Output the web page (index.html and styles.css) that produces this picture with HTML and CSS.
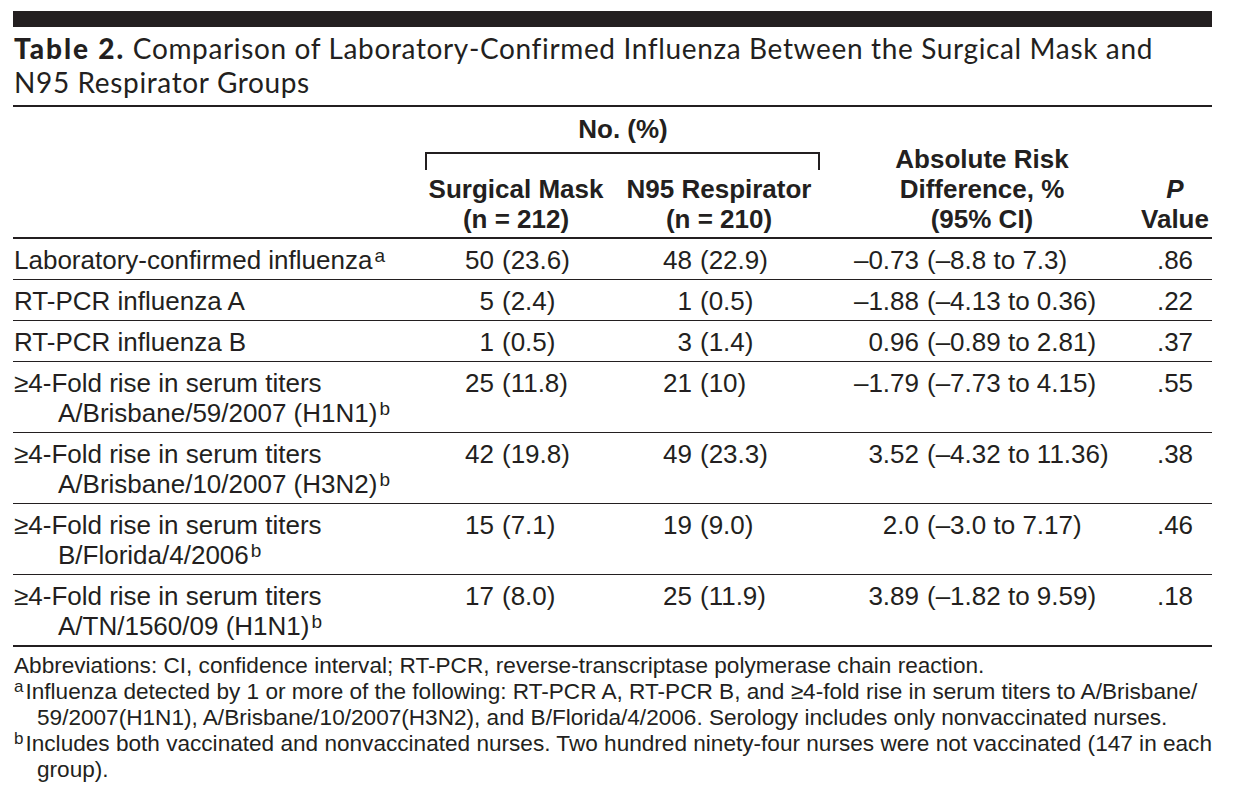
FILE: index.html
```html
<!DOCTYPE html>
<html lang="en">
<head>
<meta charset="utf-8">
<title>Table 2</title>
<link rel="stylesheet" href="styles.css">
</head>
<body>
<div class="page">
  <div class="topbar"></div>
  <h1 class="title"><b>Table 2.</b> Comparison of Laboratory-Confirmed Influenza Between the Surgical Mask and<br>N95 Respirator Groups</h1>

  <div class="thead">
    <div class="h-stub"></div>
    <div class="h-group">No. (%)</div>
    <div class="h-bracket"></div>
    <div class="h-col h-surg">Surgical Mask<br>(n = 212)</div>
    <div class="h-col h-n95">N95 Respirator<br>(n = 210)</div>
    <div class="h-ard">Absolute Risk<br>Difference, %<br>(95% CI)</div>
    <div class="h-p"><i>P</i><br>Value</div>
  </div>

  <div class="row">
    <div class="stub">Laboratory-confirmed influenza<sup>a</sup></div>
    <div class="c1"><span class="lead">50</span>(23.6)</div>
    <div class="c2"><span class="lead">48</span>(22.9)</div>
    <div class="c3"><span class="lead">–0.73</span>(–8.8 to 7.3)</div>
    <div class="c4">.86</div>
  </div>
  <div class="row">
    <div class="stub">RT-PCR influenza A</div>
    <div class="c1"><span class="lead">5</span>(2.4)</div>
    <div class="c2"><span class="lead">1</span>(0.5)</div>
    <div class="c3"><span class="lead">–1.88</span>(–4.13 to 0.36)</div>
    <div class="c4">.22</div>
  </div>
  <div class="row">
    <div class="stub">RT-PCR influenza B</div>
    <div class="c1"><span class="lead">1</span>(0.5)</div>
    <div class="c2"><span class="lead">3</span>(1.4)</div>
    <div class="c3"><span class="lead">0.96</span>(–0.89 to 2.81)</div>
    <div class="c4">.37</div>
  </div>
  <div class="row">
    <div class="stub">≥4-Fold rise in serum titers<br>A/Brisbane/59/2007 (H1N1)<sup>b</sup></div>
    <div class="c1"><span class="lead">25</span>(11.8)</div>
    <div class="c2"><span class="lead">21</span>(10)</div>
    <div class="c3"><span class="lead">–1.79</span>(–7.73 to 4.15)</div>
    <div class="c4">.55</div>
  </div>
  <div class="row">
    <div class="stub">≥4-Fold rise in serum titers<br>A/Brisbane/10/2007 (H3N2)<sup>b</sup></div>
    <div class="c1"><span class="lead">42</span>(19.8)</div>
    <div class="c2"><span class="lead">49</span>(23.3)</div>
    <div class="c3"><span class="lead">3.52</span>(–4.32 to 11.36)</div>
    <div class="c4">.38</div>
  </div>
  <div class="row">
    <div class="stub">≥4-Fold rise in serum titers<br>B/Florida/4/2006<sup>b</sup></div>
    <div class="c1"><span class="lead">15</span>(7.1)</div>
    <div class="c2"><span class="lead">19</span>(9.0)</div>
    <div class="c3"><span class="lead">2.0</span>(–3.0 to 7.17)</div>
    <div class="c4">.46</div>
  </div>
  <div class="row last">
    <div class="stub">≥4-Fold rise in serum titers<br>A/TN/1560/09 (H1N1)<sup>b</sup></div>
    <div class="c1"><span class="lead">17</span>(8.0)</div>
    <div class="c2"><span class="lead">25</span>(11.9)</div>
    <div class="c3"><span class="lead">3.89</span>(–1.82 to 9.59)</div>
    <div class="c4">.18</div>
  </div>

  <div class="notes">
    <p class="note plain">Abbreviations: CI, confidence interval; RT-PCR, reverse-transcriptase polymerase chain reaction.</p>
    <p class="note"><sup>a</sup>Influenza detected by 1 or more of the following: RT-PCR A, RT-PCR B, and ≥4-fold rise in serum titers to A/Brisbane/<br>59/2007(H1N1), A/Brisbane/10/2007(H3N2), and B/Florida/4/2006. Serology includes only nonvaccinated nurses.</p>
    <p class="note"><sup>b</sup>Includes both vaccinated and nonvaccinated nurses. Two hundred ninety-four nurses were not vaccinated (147 in each<br>group).</p>
  </div>
</div>
</body>
</html>
```

FILE: styles.css
```css
html, body {
  margin: 0;
  padding: 0;
  background: #ffffff;
}

body {
  font-family: "Liberation Sans", Arial, sans-serif;
  color: #231f20;
}

.page {
  width: 1199px;
  padding: 11px 0 0 13px;
}

.topbar {
  height: 16px;
  background: #231f20;
}

.title {
  margin: 5px 0 0 0;
  padding: 0 0 6px 1px;
  font-family: Lato, "Noto Sans", sans-serif;
  font-size: 28px;
  font-weight: 400;
  line-height: 33.6px;
  letter-spacing: 0.64px;
  white-space: nowrap;
  border-bottom: 2px solid #231f20;
}

.title b {
  font-weight: 900;
  letter-spacing: 1.9px;
}

/* ---------- header ---------- */
.thead {
  display: grid;
  grid-template-columns: 407px 192px 214px 312px 74px;
  padding: 7px 0 3px 0;
  border-bottom: 2px solid #231f20;
  font-size: 26px;
  line-height: 30px;
  font-weight: 700;
  text-align: center;
  white-space: nowrap;
}

.h-stub {
  grid-column: 1;
  grid-row: 1 / 4;
}

.h-group {
  grid-column: 2 / 4;
  grid-row: 1;
}

.h-bracket {
  grid-column: 2 / 4;
  grid-row: 2;
  height: 16px;
  margin: 8px 6px 0 5px;
  border: 2px solid #231f20;
  border-bottom: none;
}

.h-col {
  grid-row: 3;
  margin-top: 4px;
}

.h-surg { grid-column: 2; }
.h-n95 { grid-column: 3; }

.h-ard {
  grid-column: 4;
  grid-row: 1 / 4;
  align-self: end;
}

.h-p {
  grid-column: 5;
  grid-row: 1 / 4;
  align-self: end;
}

.h-p i {
  font-style: italic;
}

/* ---------- body rows ---------- */
.row {
  display: grid;
  grid-template-columns: 407px 192px 214px 312px 74px;
  padding: 6px 0 4px 0;
  border-bottom: 1px solid #231f20;
  font-size: 26px;
  line-height: 30px;
  white-space: nowrap;
}

.row.last {
  border-bottom-width: 2px;
}

.stub {
  padding-left: 45px;
  text-indent: -44px;
}

.row sup {
  font-size: 19px;
  line-height: 0;
  vertical-align: 7px;
  margin-left: 2px;
}

.lead {
  display: inline-block;
  text-align: right;
  margin-right: 8px;
}

.c1 .lead { width: 74px; }
.c2 .lead { width: 80px; }
.c3 .lead { width: 93px; }

.c4 {
  text-align: center;
}

/* ---------- notes ---------- */
.notes {
  padding-top: 6px;
  font-size: 22.6px;
  line-height: 26px;
  white-space: nowrap;
}

.note {
  margin: 0;
  padding-left: 24px;
  text-indent: -23px;
}

.note sup {
  font-size: 17px;
  line-height: 0;
  vertical-align: 7px;
  margin-right: 2px;
}
```
